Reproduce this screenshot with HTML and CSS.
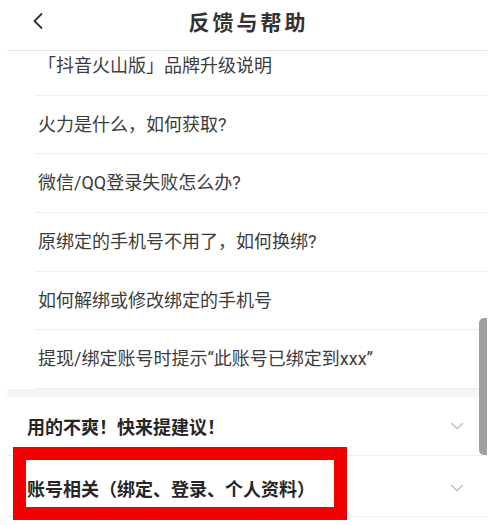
FILE: index.html
```html
<!DOCTYPE html>
<html lang="zh-CN">
<head>
<meta charset="utf-8">
<title>反馈与帮助</title>
<link rel="stylesheet" href="styles.css">
</head>
<body>
<div class="page">
  <header class="header">
    <span class="back">
      <svg width="12" height="18" viewBox="0 0 12 18"><polyline points="9.5,2 2.5,9 9.5,16" fill="none" stroke="#333" stroke-width="1.8" stroke-linecap="round" stroke-linejoin="round"/></svg>
    </span>
    <h1 class="title">反馈与帮助</h1>
  </header>
  <div class="scroll">
    <ul class="faq">
      <li class="faq-item first">「抖音火山版」品牌升级说明</li>
      <li class="faq-item">火力是什么，如何获取?</li>
      <li class="faq-item">微信/QQ登录失败怎么办?</li>
      <li class="faq-item">原绑定的手机号不用了，如何换绑?</li>
      <li class="faq-item">如何解绑或修改绑定的手机号</li>
      <li class="faq-item">提现/绑定账号时提示“此账号已绑定到xxx”</li>
    </ul>
    <div class="band"></div>
    <div class="section">
      <span class="section-title">用的不爽！快来提建议！</span>
      <svg class="chev" width="14" height="8" viewBox="0 0 14 8"><polyline points="1,1 7,6.5 13,1" fill="none" stroke="#bdbdbd" stroke-width="1.3"/></svg>
    </div>
    <div class="section tall">
      <span class="section-title">账号相关（绑定、登录、个人资料）</span>
      <svg class="chev" width="14" height="8" viewBox="0 0 14 8"><polyline points="1,1 7,6.5 13,1" fill="none" stroke="#bdbdbd" stroke-width="1.3"/></svg>
    </div>
    <div class="scrollbar"></div>
    <div class="mark"></div>
  </div>
</div>
</body>
</html>
```
FILE: styles.css
```css
* { box-sizing: border-box; }
html, body { margin: 0; padding: 0; background: #fff; }
body {
  font-family: Roboto, "Noto Sans CJK SC", sans-serif;
  width: 500px;
  height: 525px;
  overflow: hidden;
}
.page { position: relative; width: 500px; height: 525px; }
.header {
  position: relative;
  height: 51px;
  margin: 0 13px 0 7px;
  padding-bottom: 9px;
  border-bottom: 1px solid #e6e6e6;
  display: flex;
  align-items: center;
  justify-content: center;
}
.back {
  position: absolute;
  left: 25px;
  top: 12px;
  display: flex;
}
.title {
  margin: 0;
  font-size: 21px;
  font-weight: 700;
  color: #333;
  letter-spacing: 3px;
  margin-left: 3px;
}
.scroll { position: relative; height: 474px; overflow: hidden; }
.faq { list-style: none; margin: 0; padding: 0; }
.faq-item {
  height: 58.7px;
  margin: 0 13px 0 35px;
  padding-left: 3px;
  padding-bottom: 4px;
  border-bottom: 1px solid #eeeeee;
  display: flex;
  align-items: center;
  font-size: 18px;
  color: #3c3c3c;
}
.faq-item.first { margin-top: -14px; }
.band { height: 8px; margin: 0 13px 0 7px; background: #f5f5f5; }
.section {
  height: 59px;
  margin: 0 13px 0 7px;
  padding: 0 23px 0 20px;
  border-bottom: 1px solid #eeeeee;
  display: flex;
  align-items: center;
  justify-content: space-between;
}
.section.tall { height: 61px; padding-top: 3px; }
.section-title { font-size: 18px; font-weight: 700; color: #262626; }
.chev { display: block; }
.scrollbar {
  position: absolute;
  left: 479px;
  top: 267px;
  width: 8px;
  height: 137px;
  background: #9f9f9f;
  border-radius: 5px 0 0 5px;
}
.mark {
  position: absolute;
  left: 13px;
  top: 396px;
  width: 334px;
  height: 73px;
  border: 13px solid #f00000;
}
```
